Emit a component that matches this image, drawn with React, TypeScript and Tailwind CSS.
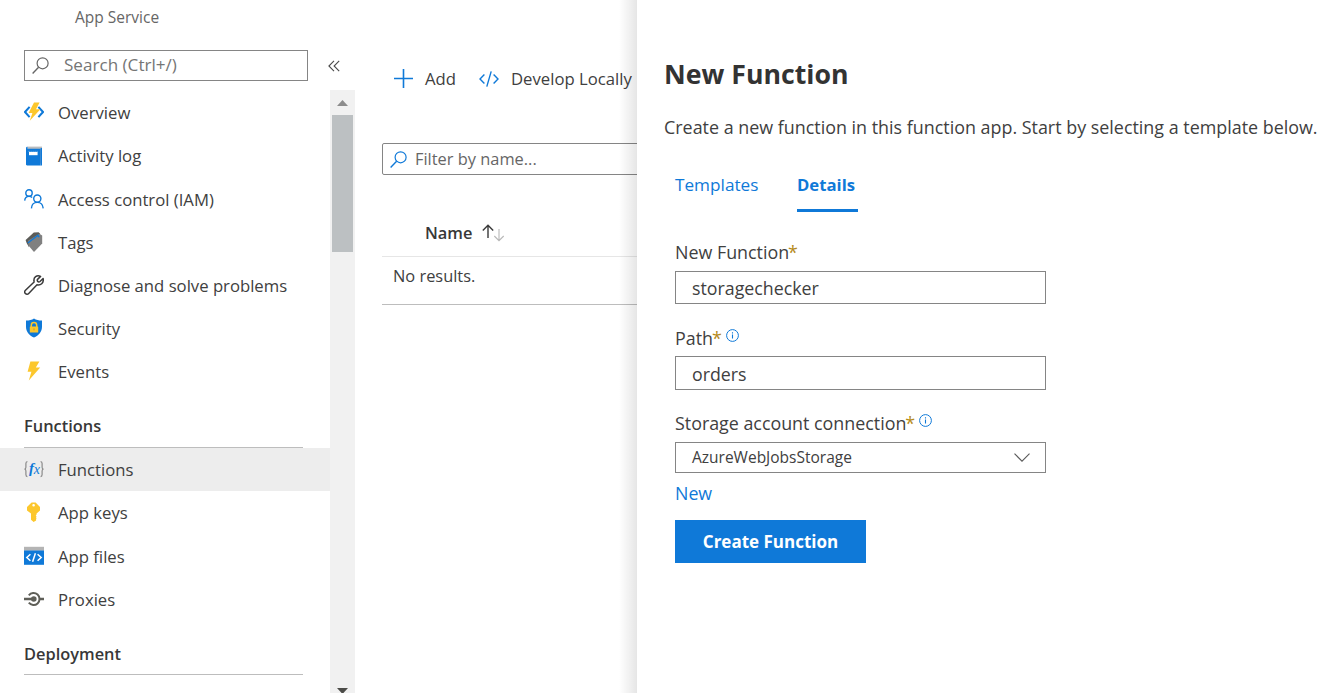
import type { ReactNode } from "react";

const BLUE = "#0f79d8";
const YELLOW = "#fcc72d";

function Icon20({ children }: { children: ReactNode }) {
  return (
    <svg viewBox="0 0 20 20" className="size-5 shrink-0" fill="none">
      {children}
    </svg>
  );
}

const OverviewIcon = () => (
  <Icon20>
    <path d="M5.6 4.8 1 10l4.6 5.2M14.4 4.8 19 10l-4.6 5.2" stroke={BLUE} strokeWidth="2" />
    <path d="M10 .6h5.600l-3.600 6.600h4.400L5.800 18.800l2.600-7.800H4.600z" fill={YELLOW} />
  </Icon20>
);

const ActivityLogIcon = () => (
  <Icon20>
    <path d="M3.6.6H18v17H3.6z" fill="#b8bcc0" />
    <path d="M2 2.4C2 1.2 2.8.8 3.6.8v2h13V19.4H3.2C2.4 19.4 2 19 2 18.2z" fill={BLUE} />
    <path d="M16.600 2h1.400v17.400h-1.400z" fill={BLUE} />
    <path d="M5 6h8.6v3.2H5z" fill="#fff" />
    <path d="M4.600 5.400h10" stroke="#7fb8ea" strokeWidth="1" strokeDasharray="1 1" />
  </Icon20>
);

const AccessIcon = () => (
  <Icon20>
    <circle cx="5" cy="4" r="3.2" stroke={BLUE} strokeWidth="1.4" />
    <path d="M.7 11.600c.2-2.6 1.900-4.200 4.300-4.200 1.300 0 2.300.4 3.100 1.200" stroke={BLUE} strokeWidth="1.4" />
    <circle cx="13.300" cy="9.600" r="3.600" stroke={BLUE} strokeWidth="1.400" />
    <path d="M7.400 19.400c.2-3.600 2.600-6 5.900-6s5.600 2.400 5.900 6" stroke={BLUE} strokeWidth="1.400" />
  </Icon20>
);

const TagsIcon = () => (
  <Icon20>
    <path d="M1.600 8 9.800.6l4.800-.4 1.600 1.600L5 10.800v4.400L2.600 11z" fill="#5c5c58" />
    <path d="M4 8.800 15.400 1.800l2.800 1.800v8L10 20l-5.600-6.400z" fill="#808080" />
    <path d="M3.800 11 14.600 2.800" stroke={BLUE} strokeWidth="1.300" />
    <circle cx="14.600" cy="4.400" r=".9" fill={BLUE} />
  </Icon20>
);

const WrenchIcon = () => (
  <Icon20>
    <path
      d="M15.300.9C12.900.3 9.600 2 9.900 5.700l.2 1.300L1.500 15.200c-1 1-1 2.400-.1 3.300.9.900 2.400.9 3.300-.1l8.300-8.600c3.400.9 7.100-1.700 6.100-6.300L16 6.500c-.8.600-1.700.5-2.300-.1-.6-.7-.6-1.500.1-2.300L16.600 1.400z"
      stroke="#3b3b3b"
      strokeWidth="1.500"
      strokeLinejoin="round"
    />
  </Icon20>
);

const ShieldIcon = () => (
  <Icon20>
    <path d="M10 .6c2.200 1.400 4.600 2 8 2v6.200c0 5-3.200 8.800-8 10.800-4.800-2-8-5.800-8-10.800V2.600c3.400 0 5.800-.6 8-2z" fill={BLUE} />
    <path d="M7.300 9V7.200C7.300 5.600 8.400 4.600 10 4.600s2.700 1 2.700 2.600V9" stroke={YELLOW} strokeWidth="1.500" />
    <rect x="5.800" y="8.400" width="8.400" height="6.200" rx=".6" fill={YELLOW} />
    <path d="M10 10.400v2" stroke="#c99a20" strokeWidth="1" />
  </Icon20>
);

const EventsIcon = () => (
  <Icon20>
    <path d="M6.400.4h9l-3.600 6.200h4.400L4.800 19.600l2.600-8.800H3.600z" fill={YELLOW} />
  </Icon20>
);

const FunctionsIcon = () => (
  <Icon20>
    <path d="M3.400 2.600C2 2.600 1.900 3.400 1.900 4.600v3.600c0 1.200-.4 1.800-1.400 1.900 1 .1 1.400.7 1.400 1.900v3.600c0 1.200.1 2 1.500 2M16.600 2.600c1.400 0 1.500.8 1.500 2v3.600c0 1.200.4 1.800 1.400 1.900-1 .1-1.400.7-1.400 1.900v3.600c0 1.200-.1 2-1.500 2" stroke="#8a8a8a" strokeWidth="1.200" />
    <text x="5" y="13.600" fontFamily="Liberation Serif, serif" fontStyle="italic" fontWeight="700" fontSize="15" fill={BLUE}>f</text>
    <text x="9.800" y="15" fontFamily="Liberation Serif, serif" fontStyle="italic" fontWeight="400" fontSize="14" fill={BLUE}>x</text>
  </Icon20>
);

const KeyIcon = () => (
  <Icon20>
    <path
      fillRule="evenodd"
      d="M7.600.6h4L16 5v3.600l-3.400 3v.9l-.9.9.9.9-.7.900.7.900-.5.900v1.600L9.600 20 7 17.800v-6.200L3 8.600V5zM9.600 2a1.300 1.300 0 1 0 0 2.600 1.300 1.300 0 0 0 0-2.600z"
      fill={YELLOW}
    />
  </Icon20>
);

const FilesIcon = () => (
  <Icon20>
    <path d="M0 .8h20v4H0z" fill="#b4b4b4" />
    <path d="M0 4.500h20v14.300H0z" fill={BLUE} />
    <path d="M6.400 8.200 2.800 11.500l3.600 3.300M13.600 8.200l3.600 3.300-3.600 3.300M11.400 7.200 8.600 15.800" stroke="#fff" strokeWidth="1.500" />
  </Icon20>
);

const ProxiesIcon = () => (
  <Icon20>
    <path d="M0 10h9M16 10h4" stroke="#5f5f58" strokeWidth="2.400" />
    <circle cx="9.800" cy="10" r="2.800" fill="#5f5f58" />
    <path d="M4.800 6.300A6 6 0 1 1 4.800 13.700" stroke="#5f5f58" strokeWidth="2" />
  </Icon20>
);

const SearchIcon = ({ color }: { color: string }) => (
  <svg viewBox="0 0 17 17" className="size-[17px] shrink-0" fill="none" stroke={color} strokeWidth="1.200">
    <circle cx="10.600" cy="6.300" r="5.500" />
    <path d="M6.600 10.300.6 16.400" strokeWidth="1.400" />
  </svg>
);

const InfoIcon = () => (
  <svg viewBox="0 0 13 13" className="size-[13px] shrink-0" fill="none" stroke={BLUE}>
    <circle cx="6.500" cy="6.500" r="5.900" strokeWidth="1" />
    <path d="M6.500 5.500v4M6.500 3.200v1.200" strokeWidth="1.100" />
  </svg>
);

type Item = { label: string; icon: ReactNode; active?: boolean };

const general: Item[] = [
  { label: "Overview", icon: <OverviewIcon /> },
  { label: "Activity log", icon: <ActivityLogIcon /> },
  { label: "Access control (IAM)", icon: <AccessIcon /> },
  { label: "Tags", icon: <TagsIcon /> },
  { label: "Diagnose and solve problems", icon: <WrenchIcon /> },
  { label: "Security", icon: <ShieldIcon /> },
  { label: "Events", icon: <EventsIcon /> },
];

const functionItems: Item[] = [
  { label: "Functions", icon: <FunctionsIcon />, active: true },
  { label: "App keys", icon: <KeyIcon /> },
  { label: "App files", icon: <FilesIcon /> },
  { label: "Proxies", icon: <ProxiesIcon /> },
];

function MenuItem({ label, icon, active }: Item) {
  return (
    <li className={`flex h-[43.15px] items-center gap-3.5 pl-6 ${active ? "bg-[#ededed]" : ""}`}>
      <span>{icon}</span>
      <span className="pt-px">{label}</span>
    </li>
  );
}

function SectionTitle({ children }: { children: string }) {
  return (
    <h2 className="ml-6 flex h-[55px] w-[279px] items-center border-b border-[#bdbdbd] pt-[13px] text-[16.4px] font-semibold text-[#383838]">
      {children}
    </h2>
  );
}

function Sidebar() {
  return (
    <aside className="flex w-[355px] shrink-0 flex-col">
      <p className="h-[50px] pt-1.5 pl-[75px] text-[15.5px] leading-[23px] text-[#666]">App Service</p>
      <div className="flex items-center">
        <div className="ml-6 flex h-[31px] w-[284px] items-center border border-[#858585] pl-[7px] text-[17.1px] text-[#757575]">
          <SearchIcon color="#666" />
          <span className="-mt-0.5 ml-[15px] leading-none">Search (Ctrl+/)</span>
        </div>
        <svg viewBox="0 0 12 12" className="ml-5 size-3" fill="none" stroke="#4a4a4a" strokeWidth="1.100">
          <path d="M6 .8.900 6 6 11.200M11.200.8 6.100 6l5.100 5.200" />
        </svg>
      </div>
      <div className="mt-[9px] flex min-h-0 flex-1">
        <nav className="w-[330px] overflow-hidden pt-[0.8px]">
          <ul>{general.map((i) => <MenuItem key={i.label} {...i} />)}</ul>
          <SectionTitle>Functions</SectionTitle>
          <ul>{functionItems.map((i) => <MenuItem key={i.label} {...i} />)}</ul>
          <SectionTitle>Deployment</SectionTitle>
        </nav>
        <div className="flex w-[25px] flex-col items-center bg-[#f1f1f1]">
          <svg viewBox="0 0 11 6" className="mt-2.5 h-1.5 w-[11px]"><path d="M5.500 0 11 6H0z" fill="#8c8c8c" /></svg>
          <div className="mt-[9px] h-[137px] w-[21px] bg-[#bcc0c2]" />
          <svg viewBox="0 0 11 6" className="mt-auto -mb-px h-1.5 w-[11px]"><path d="M0 0h11L5.500 6z" fill="#4c4c48" /></svg>
        </div>
      </div>
    </aside>
  );
}

function FunctionList() {
  return (
    <main className="relative w-[282px] shrink-0 overflow-hidden pt-[62px] pl-[27px]">
      <div className="flex h-[33px] items-center pl-3 whitespace-nowrap">
        <svg viewBox="0 0 19 19" className="size-[19px]" stroke={BLUE} strokeWidth="1.600"><path d="M9.500 0v19M0 9.500h19" /></svg>
        <span className="ml-3 w-8">Add</span>
        <svg viewBox="0 0 20 16" className="ml-[22px] h-4 w-5" fill="none" stroke={BLUE} strokeWidth="1.400">
          <path d="M5.400 3.400 1 8l4.400 4.600M14.600 3.400 19 8l-4.400 4.600M12.200.4 7.800 15.600" />
        </svg>
        <span className="ml-3">Develop Locally</span>
      </div>
      <div className="mt-12 flex h-8 w-[300px] items-center rounded-xs border border-[#858585] pl-[7px] text-[16.4px] text-[#666]">
        <SearchIcon color={BLUE} />
        <span className="ml-2">Filter by name...</span>
      </div>
      <div className="mt-[35px] flex h-[47px] items-center border-b border-[#e6e6e6] pl-[43px] text-[16.4px] font-semibold text-[#383838]">
        Name
        <svg viewBox="0 0 23 18" className="ml-2.5 h-[18px] w-[23px]" fill="none">
          <path d="M6 14V1.500M.8 6.500 6 1.200l5.200 5.300" stroke="#3a3a3a" strokeWidth="1.400" />
          <path d="M17 5v11.500M12.300 12l4.700 4.700 4.700-4.700" stroke="#b8b8b8" strokeWidth="1.100" />
        </svg>
      </div>
      <p className="h-12 border-b border-[#bdbdbd] pt-[7px] pl-[11px] text-[16.4px] leading-6">No results.</p>
      <div className="absolute inset-y-0 right-0 w-[18px] bg-linear-to-r from-transparent to-black/10" />
    </main>
  );
}

function FieldLabel({ children, info }: { children: string; info?: boolean }) {
  return (
    <div className="flex h-7 items-center pt-px text-[17.850px]">
      <span>{children}</span>
      <span className="-ml-px text-[#b58a1a]">*</span>
      {info && <span className="-mt-[7px] ml-1">{<InfoIcon />}</span>}
    </div>
  );
}

function NewFunctionPanel() {
  return (
    <section className="flex-1 overflow-hidden bg-white pt-[54px] pl-[27px]">
      <h1 className="h-10 text-[26.700px] leading-10 font-bold text-[#333]">New Function</h1>
      <p className="mt-5 text-[17.900px] leading-[26px] whitespace-nowrap">
        Create a new function in this function app. Start by selecting a template below.
      </p>
      <div className="ml-[11px]">
        <div className="mt-[30px] flex h-[42px] gap-[38px] text-[17.200px] leading-[30px] text-[#0f79d8]">
          <span className="w-[84px]">Templates</span>
          <span className="w-[61px] border-b-3 border-[#0f79d8] text-[16.700px] font-bold">Details</span>
        </div>
        <div className="mt-[26px]">
          <FieldLabel>New Function</FieldLabel>
          <div className="mt-[5px] flex h-[33px] w-[371px] items-center border border-[#858585] pt-px pl-4 text-[17.800px]">storagechecker</div>
        </div>
        <div className="mt-5">
          <FieldLabel info>Path</FieldLabel>
          <div className="mt-1 flex h-[34px] w-[371px] items-center border border-[#858585] pt-0.5 pl-4 text-[17.800px]">orders</div>
        </div>
        <div className="mt-[19px]">
          <FieldLabel info>Storage account connection</FieldLabel>
          <div className="mt-[5px] flex h-[31px] w-[371px] items-center justify-between border border-[#858585] pr-[15px] pl-4 text-[15.500px]">
            AzureWebJobsStorage
            <svg viewBox="0 0 16 9" className="h-[9px] w-4" fill="none" stroke="#5a5a5a" strokeWidth="1.100"><path d="M.5.6 8 8.200 15.500.6" /></svg>
          </div>
        </div>
        <p className="mt-[7px] text-[17.800px] leading-[27px] text-[#0f79d8]">New</p>
        <button className="mt-[13px] flex h-[43px] w-[191px] items-center justify-center bg-[#0f79d8] text-[17px] font-bold text-white">
          Create Function
        </button>
      </div>
    </section>
  );
}

export default function App() {
  return (
    <div className="flex h-[693px] w-[1318px] overflow-hidden bg-white font-['Open_Sans','Noto_Sans',sans-serif] text-[16.7px] text-[#404040]">
      <Sidebar />
      <FunctionList />
      <NewFunctionPanel />
    </div>
  );
}
